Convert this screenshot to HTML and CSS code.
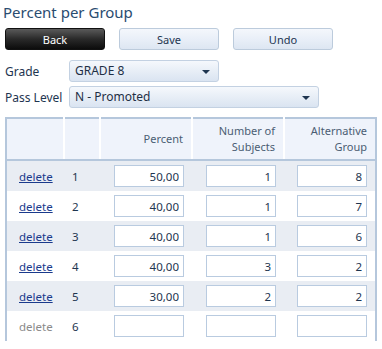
FILE: index.html
```html
<!DOCTYPE html>
<html lang="en">
<head>
    <meta charset="UTF-8">
    <title>Percent per Group</title>
    <link rel="stylesheet" href="styles.css">
</head>
<body>
    <h1 class="title">Percent per Group</h1>
    <div class="toolbar">
        <button class="btn btn-dark">Back</button>
        <button class="btn">Save</button>
        <button class="btn">Undo</button>
    </div>
    <div class="field">
        <label>Grade</label>
        <div class="select select-short">GRADE 8<span class="arrow"></span></div>
    </div>
    <div class="field">
        <label>Pass Level</label>
        <div class="select select-long">N - Promoted<span class="arrow"></span></div>
    </div>
    <table class="grid">
        <colgroup>
            <col class="col-del">
            <col class="col-no">
            <col class="col-val">
            <col class="col-val">
            <col class="col-val">
        </colgroup>
        <thead>
            <tr>
                <th></th>
                <th></th>
                <th>Percent</th>
                <th>Number of<br>Subjects</th>
                <th>Alternative<br>Group</th>
            </tr>
        </thead>
        <tbody>
            <tr class="odd">
                <td><a href="#">delete</a></td><td>1</td>
                <td><input value="50,00"></td><td><input value="1"></td><td><input value="8"></td>
            </tr>
            <tr>
                <td><a href="#">delete</a></td><td>2</td>
                <td><input value="40,00"></td><td><input value="1"></td><td><input value="7"></td>
            </tr>
            <tr class="odd">
                <td><a href="#">delete</a></td><td>3</td>
                <td><input value="40,00"></td><td><input value="1"></td><td><input value="6"></td>
            </tr>
            <tr>
                <td><a href="#">delete</a></td><td>4</td>
                <td><input value="40,00"></td><td><input value="3"></td><td><input value="2"></td>
            </tr>
            <tr class="odd">
                <td><a href="#">delete</a></td><td>5</td>
                <td><input value="30,00"></td><td><input value="2"></td><td><input value="2"></td>
            </tr>
            <tr>
                <td><span class="disabled">delete</span></td><td>6</td>
                <td><input value=""></td><td><input value=""></td><td><input value=""></td>
            </tr>
        </tbody>
    </table>
</body>
</html>
```

FILE: styles.css
```css
body {
    margin: 0;
    padding: 0 0 0 5px;
    font-family: "Segoe UI", "Noto Sans", sans-serif;
    font-size: 11px;
    color: #1e3550;
    background: white;
}
.title {
    margin: 0 0 0 -2px;
    height: 28px;
    line-height: 25px;
    font-size: 15px;
    font-weight: normal;
    color: #2a4c70;
}
.toolbar {
    display: flex;
    gap: 14px;
    height: 22px;
    margin-bottom: 10px;
}
.btn {
    width: 100px;
    height: 22px;
    padding: 0;
    font-family: inherit;
    font-size: 11px;
    color: #1e3550;
    border: 1px solid #bccbdc;
    border-radius: 3px;
    background: linear-gradient(#f4f7fc, #e9eff8 50%, #dde6f2);
}
.btn-dark {
    color: white;
    border-color: #111;
    background: linear-gradient(#5a5a5a, #2a2a2a 50%, #0c0c0c);
}
.field {
    display: flex;
    align-items: center;
    height: 22px;
    margin-bottom: 4px;
}
.field label {
    width: 64px;
    font-size: 12px;
}
.select {
    position: relative;
    box-sizing: border-box;
    height: 22px;
    line-height: 20px;
    padding-left: 5px;
    font-size: 12px;
    color: #1e2f45;
    border: 1px solid #c3d1e2;
    border-radius: 3px;
    background: linear-gradient(#f5f8fc, #e6edf6 55%, #dae4f1);
}
.select-short {
    width: 150px;
}
.select-long {
    width: 250px;
}
.arrow {
    position: absolute;
    right: 8px;
    top: 9px;
    border-left: 4px solid transparent;
    border-right: 4px solid transparent;
    border-top: 4px solid #1e3550;
}
.grid {
    margin-top: 9px;
    width: 372px;
    table-layout: fixed;
    border-collapse: collapse;
    border-left: 2px solid #b5c7dc;
    border-right: 2px solid #b5c7dc;
    border-top: 2px solid #b5c7dc;
}
.grid .col-del {
    width: 58px;
}
.grid .col-no {
    width: 36px;
}
.grid .col-val {
    width: 92px;
}
.grid th {
    height: 40px;
    padding: 0 8px 0 0;
    text-align: right;
    font-weight: normal;
    line-height: 16px;
    color: #4b5d73;
    background: #eff3fb;
    border-left: 2px solid white;
    border-bottom: 2px solid #b5c7dc;
}
.grid th:first-child {
    border-left: none;
}
.grid td {
    height: 30px;
    padding: 0 8px 0 0;
    text-align: right;
    font-size: 11.5px;
}
.grid td:nth-child(1) {
    padding-left: 12px;
    text-align: left;
}
.grid td:nth-child(2) {
    padding-left: 8px;
    text-align: left;
}
.grid tr.odd td {
    background: #e9edf3;
}
.grid a {
    color: #1a3a8c;
}
.grid .disabled {
    color: #8a8a8a;
}
.grid input {
    box-sizing: border-box;
    width: 70px;
    height: 22px;
    padding: 0 4px;
    text-align: right;
    font-family: inherit;
    font-size: 11.5px;
    color: #1e3550;
    border: 1px solid #b9cbe0;
    background: white;
}
```
